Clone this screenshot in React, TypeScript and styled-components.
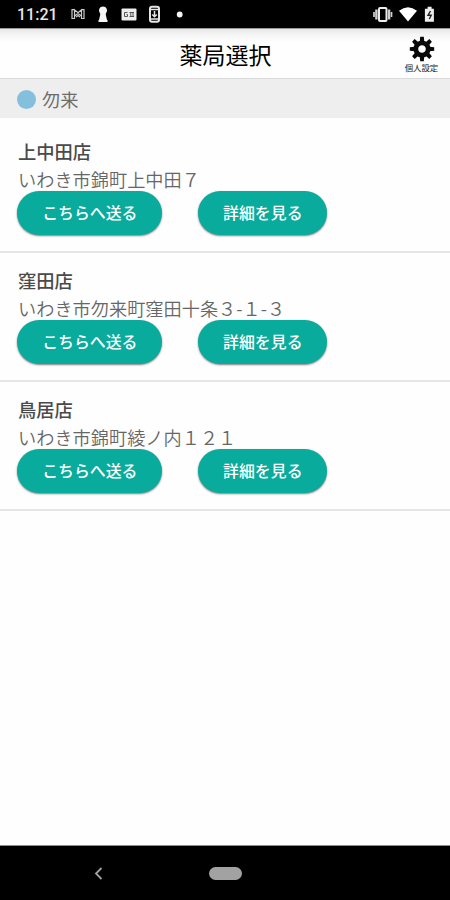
import React from "react";
import styled, { createGlobalStyle } from "styled-components";

const Global = createGlobalStyle`
  * { box-sizing: border-box; }
  body {
    margin: 0;
    background: #fff;
    font-family: "Noto Sans CJK JP", sans-serif;
  }
`;

const Screen = styled.div`
  width: 450px;
  height: 900px;
  display: flex;
  flex-direction: column;
  overflow: hidden;
  background: #fefefe;
`;

const StatusBar = styled.div`
  height: 28px;
  flex: none;
  display: flex;
  align-items: center;
  justify-content: space-between;
  padding: 0 15px 0 17px;
  background: #000;
`;

const Clock = styled.span`
  width: 53px;
  padding-top: 1px;
  font: 500 16px/28px Roboto, sans-serif;
  color: #e6e6e6;
`;

const StatusGroup = styled.div`
  display: flex;
  align-items: center;
  svg { display: block; }
`;

const Header = styled.header`
  height: 51px;
  flex: none;
  display: grid;
  grid-template-columns: 58px 1fr 58px;
  border-top: 1px solid #9a9a9a;
  border-bottom: 1px solid #dadada;
  background: linear-gradient(#e6e6e6, #f4f4f4 5px, #fefefe 13px);
`;

const Title = styled.h1`
  margin: 0;
  padding-left: 1px;
  font-size: 23px;
  line-height: 50px;
  font-weight: 400;
  text-align: center;
  color: #000;
  white-space: nowrap;
`;

const Settings = styled.div`
  display: flex;
  flex-direction: column;
  align-items: center;
  padding: 7px 0 0 1px;
  svg { display: block; }
`;

const SettingsLabel = styled.span`
  font-size: 8.4px;
  line-height: 10px;
  font-weight: 400;
  color: #222;
`;

const Area = styled.div`
  height: 39px;
  flex: none;
  display: flex;
  align-items: center;
  gap: 6px;
  padding: 1px 17px 0;
  background: #eee;
  font-size: 18.2px;
  line-height: 36px;
  color: #6c6c6c;
`;

const Dot = styled.span`
  width: 19px;
  height: 19px;
  border-radius: 50%;
  background: #84c0dd;
`;

const List = styled.main`
  flex: 1;
  padding-top: 6px;
`;

const Store = styled.section`
  height: 129px;
  padding: 14px 17px 0 18px;
  border-bottom: 2px solid #e6e6e6;
`;

const StoreName = styled.h2`
  margin: 0;
  font-size: 18.3px;
  line-height: 27px;
  font-weight: 500;
  color: #4a4a4a;
`;

const Address = styled.p`
  margin: 0;
  height: 26px;
  font-size: 18.2px;
  line-height: 28px;
  font-weight: 350;
  color: #666;
  white-space: nowrap;
`;

const Actions = styled.div`
  display: flex;
  gap: 36px;
  margin-left: -0.7px;
`;

const Button = styled.button<{ $width: number }>`
  width: ${(p) => p.$width}px;
  height: 44px;
  padding: 0 0 1px;
  border: 0;
  border-radius: 22px;
  background: #08ab9c;
  box-shadow: 0 1px 2px rgba(0, 0, 0, 0.5);
  color: #fff;
  font: 500 15.9px/43px "Noto Sans CJK JP", sans-serif;
  white-space: nowrap;
`;

const NavBar = styled.nav`
  height: 55px;
  flex: none;
  display: flex;
  align-items: center;
  padding-left: 94px;
  border-top: 1px solid #8c8c8c;
  background: #000;
`;

const HomePill = styled.span`
  width: 33px;
  height: 13px;
  margin-left: 106px;
  border-radius: 7px;
  background: #a2a2a2;
`;

const NotificationIcons = () => (
  <svg width="115" height="20" viewBox="0 0 115 20" fill="none">
    <path d="M4.5 5.7H2V14.5H4.5V5.7L8 8.7L11.5 5.7V14.5H14V5.7H11.5M4.5 12L8 9.5L11.5 12M6 13L8 11.5L10 13" stroke="#ccc" strokeWidth="1.2" />
    <path d="M33 2.5a4 4 0 0 1 3 6.7L35.7 10.5L37 16h.5v2h-9v-2h.5l1.3-5.5L30 9.2a4 4 0 0 1 3-6.7Z" fill="#f5f5f5" />
    <rect x="51.5" y="4.5" width="15" height="12" rx="1" fill="#eee" />
    <path d="M57.5 8.5h-3v4h3v-2h-1M59.5 8.5h4.5M59.5 12.5h4.5M60.8 8v5M63 8v5" stroke="#555" strokeWidth="1" />
    <rect x="80" y="2.7" width="9" height="15" rx="2" stroke="#e5e5e5" strokeWidth="2" />
    <path d="M81 5.5h7M81 15h7" stroke="#e5e5e5" strokeWidth="1.5" />
    <path d="M84.5 7v6M82.2 10.5l2.3 2.3l2.3-2.3" stroke="#e5e5e5" strokeWidth="1.5" />
    <circle cx="109.7" cy="10.5" r="2.9" fill="#f5f5f5" />
  </svg>
);

const SystemIcons = () => (
  <svg width="64" height="20" viewBox="0 0 64 20" fill="none">
    <path d="M3 8v5M20.5 8v5" stroke="#d0d0d0" strokeWidth="1.7" />
    <path d="M5.4 5.5v10M18.1 5.5v10" stroke="#d0d0d0" strokeWidth="2.4" />
    <rect x="8" y="4" width="7.5" height="13" rx="1" stroke="#eee" strokeWidth="2" />
    <path d="M28 6.8Q37-.5 46 6.8L37 17.5Z" fill="#fff" />
    <path d="M56.7 3h4v2H63v13h-9V5h2.7Z" fill="#eee" transform="translate(-.1 -.2)" />
    <path d="M59.5 7l-2.5 4.3h3.2L58.3 15" stroke="#222" strokeWidth="1.4" />
  </svg>
);

const teeth = [0, 45, 90, 135, 180, 225, 270, 315];

const GearIcon = () => (
  <svg width="26" height="26" viewBox="-13 -13 26 26">
    {teeth.map((angle) => (
      <path key={angle} d="M-2.3-7L-1.8-12.2H1.8L2.3-7Z" transform={`rotate(${angle})`} fill="#080808" />
    ))}
    <circle r="6.2" fill="none" stroke="#080808" strokeWidth="4.8" />
  </svg>
);

const BackIcon = () => (
  <svg width="9" height="13" viewBox="0 0 9 13">
    <path d="M7.5 1L2 6.5L7.5 12" fill="none" stroke="#a2a2a2" strokeWidth="1.8" />
  </svg>
);

const stores = [
  { name: "上中田店", address: "いわき市錦町上中田７" },
  { name: "窪田店", address: "いわき市勿来町窪田十条３-１-３" },
  { name: "鳥居店", address: "いわき市錦町綾ノ内１２１" },
];

export default function App() {
  return (
    <>
      <Global />
      <Screen>
        <StatusBar>
          <StatusGroup>
            <Clock>11:21</Clock>
            <NotificationIcons />
          </StatusGroup>
          <StatusGroup>
            <SystemIcons />
          </StatusGroup>
        </StatusBar>
        <Header>
          <span />
          <Title>薬局選択</Title>
          <Settings>
            <GearIcon />
            <SettingsLabel>個人設定</SettingsLabel>
          </Settings>
        </Header>
        <Area>
          <Dot />
          勿来
        </Area>
        <List>
          {stores.map((store) => (
            <Store key={store.name}>
              <StoreName>{store.name}</StoreName>
              <Address>{store.address}</Address>
              <Actions>
                <Button $width={145}>こちらへ送る</Button>
                <Button $width={129}>詳細を見る</Button>
              </Actions>
            </Store>
          ))}
        </List>
        <NavBar>
          <BackIcon />
          <HomePill />
        </NavBar>
      </Screen>
    </>
  );
}
